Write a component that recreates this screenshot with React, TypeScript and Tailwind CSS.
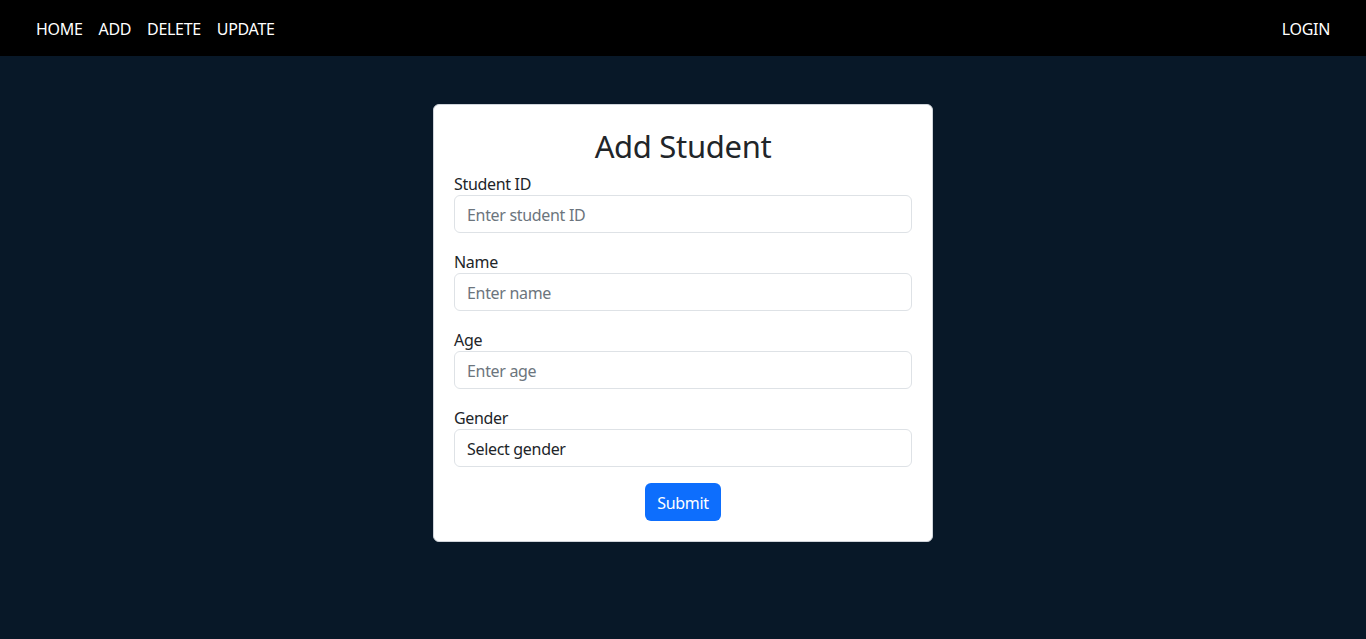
export default function App() {
  const fields = [
    { label: "Student ID", placeholder: "Enter student ID" },
    { label: "Name", placeholder: "Enter name" },
    { label: "Age", placeholder: "Enter age" },
  ];

  return (
    <div
      className="min-h-screen bg-[#081828] text-[#212529] tracking-[-0.02em]"
      style={{ fontFamily: '"Noto Sans", "Open Sans", sans-serif' }}
    >
      <nav className="h-14 bg-black flex items-center justify-between px-7 pt-[2px] text-white text-base">
        <div className="flex">
          {["HOME", "ADD", "DELETE", "UPDATE"].map((l) => (
            <a key={l} href="#" className="px-2 leading-6">
              {l}
            </a>
          ))}
        </div>
        <a href="#" className="px-2 leading-6">
          LOGIN
        </a>
      </nav>

      <div className="flex justify-center pt-12">
        <div className="w-[500px] bg-white rounded-md border border-[#cfd4da] p-5">
          <h2 className="text-[31px] h-[38px] leading-[38px] pt-[2px] text-center mb-2">Add Student</h2>
          {fields.map((f) => (
            <div key={f.label} className="mb-4">
              <label className="block text-base h-6 leading-6 pt-px">{f.label}</label>
              <input
                className="w-full h-[38px] border border-[#dee2e6] rounded-md px-3 pt-[2px] text-base placeholder:text-[#6c757d] outline-none"
                placeholder={f.placeholder}
              />
            </div>
          ))}
          <div className="mb-4">
            <label className="block text-base h-6 leading-6 pt-px">Gender</label>
            <select className="w-full h-[38px] border border-[#dee2e6] rounded-md px-3 pt-[2px] text-base appearance-none bg-white outline-none">
              <option>Select gender</option>
              <option>Male</option>
              <option>Female</option>
            </select>
          </div>
          <div className="flex justify-center">
            <button className="h-[38px] px-3 pt-[2px] bg-[#0d6efd] text-white rounded-md text-base">Submit</button>
          </div>
        </div>
      </div>
    </div>
  );
}
